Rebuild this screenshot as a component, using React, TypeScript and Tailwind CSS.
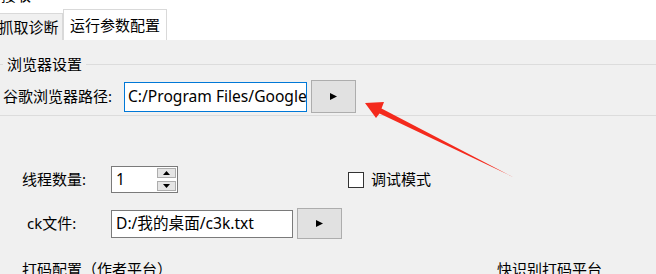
import React from 'react';

const PlayIcon = () => (
  <svg width="9" height="9" viewBox="0 0 9 9">
    <polygon points="1,1 8,4.5 1,8" fill="#000" />
  </svg>
);

const Spin = ({ up }: { up?: boolean }) => (
  <div className="w-[19px] h-[10px] bg-[#e5e5e5] border border-[#adadad] flex items-center justify-center">
    <svg width="7" height="4" viewBox="0 0 7 4">
      {up ? <polygon points="0,4 3.5,0 7,4" fill="#000" /> : <polygon points="0,0 3.5,4 7,0" fill="#000" />}
    </svg>
  </div>
);

const PickButton = ({ h }: { h: string }) => (
  <button className={`ml-[4px] w-[45px] ${h} bg-[#e1e1e1] border border-[#adadad] flex items-center justify-center`}>
    <PlayIcon />
  </button>
);

const App = () => {
  return <div className="relative w-[656px] h-[274px] overflow-hidden bg-[#f0f0f0] font-['Noto_Sans','Noto_Sans_CJK_SC',sans-serif] text-[15px] text-black">
      <div className="h-[40px] bg-white flex flex-col">
        <div className="h-[9px] overflow-hidden">
          <div className="mt-[-15px] leading-[20px] pl-[1px]">接收</div>
        </div>
        <div className="flex items-end h-[31px]">
          <div className="ml-[-6px] w-[69px] h-[27px] bg-[#f0f0f0] border border-b-0 border-[#d9d9d9] flex items-center justify-center leading-none">
            抓取诊断
          </div>
          <div className="w-[104px] h-[31px] bg-white border border-b-0 border-[#d9d9d9] flex items-center justify-center leading-none">
            运行参数配置
          </div>
        </div>
      </div>

      <fieldset className="mt-[14px] border-t border-b border-[#dcdcdc] h-[62px]">
        <legend className="ml-[3px] px-[4px] leading-[20px]">浏览器设置</legend>
        <div className="mt-[6px] flex items-center h-[33px]">
          <div className="ml-[3px] w-[121px] whitespace-nowrap">谷歌浏览器路径:</div>
          <div className="w-[183px] h-[30px] bg-white border border-[#0078d7] flex items-center pl-[3px] overflow-hidden whitespace-nowrap text-[15.6px]">
            C:/Program Files/<span className="inline-block w-px h-[19px] bg-black" />Google Chrome/Application/chrome.exe
          </div>
          <PickButton h="h-[33px]" />
        </div>
      </fieldset>

      <div className="mt-[50px] flex items-center h-[27px]">
        <div className="ml-[22px] w-[89px] whitespace-nowrap">线程数量:</div>
        <div className="w-[67px] h-[27px] bg-white border border-[#7a7a7a] flex items-center">
          <span className="pl-[4px] text-[15.6px]">1</span>
          <div className="ml-auto mr-[1px] flex flex-col gap-[3px]">
            <Spin up />
            <Spin />
          </div>
        </div>
        <div className="ml-[170px] w-[16px] h-[16px] bg-white border border-[#333]" />
        <div className="ml-[7px]">调试模式</div>
      </div>

      <div className="mt-[15px] flex items-center h-[31px]">
        <div className="ml-[27px] w-[84px] whitespace-nowrap">ck文件:</div>
        <div className="w-[182px] h-[28px] bg-white border border-[#7a7a7a] flex items-center pl-[4px] whitespace-nowrap overflow-hidden text-[15.6px]">
          D:/我的桌面/c3k.txt
        </div>
        <PickButton h="h-[31px]" />
      </div>

      <div className="mt-[20px] flex leading-[20px] whitespace-nowrap">
        <div className="ml-[22px] w-[475px]">打码配置（作者平台）</div>
        <div>快识别打码平台</div>
      </div>

      <svg className="absolute inset-0 pointer-events-none" width="656" height="274" viewBox="0 0 656 274">
        <polygon points="365,103 384,102 381.5,108.5 514,177.5 379.5,113.5 376,118" fill="#f42a1d" />
      </svg>
    </div>;
};

export default App;
